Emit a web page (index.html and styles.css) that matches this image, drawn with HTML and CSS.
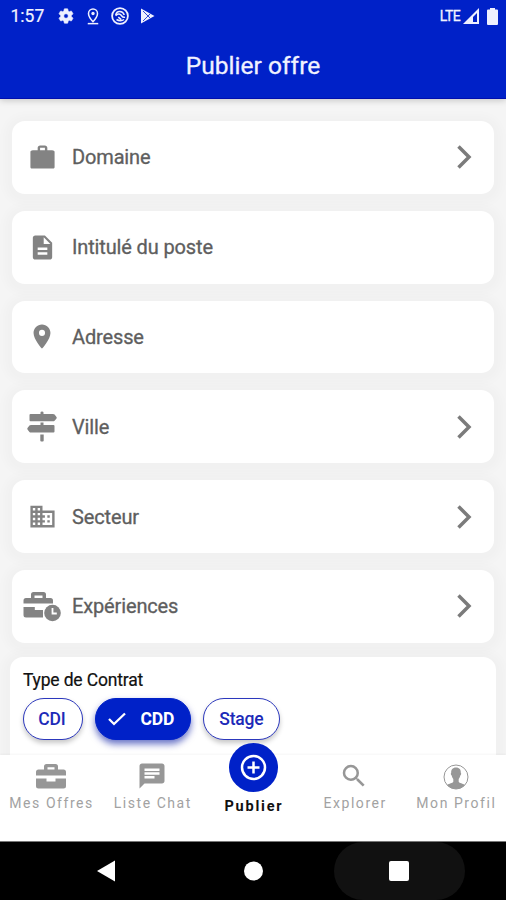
FILE: index.html
```html
<!DOCTYPE html>
<html lang="fr">
<head>
<meta charset="utf-8">
<title>Publier offre</title>
<link rel="stylesheet" href="styles.css">
</head>
<body>
<div class="screen">
  <header class="header">
    <div class="status">
      <span class="time">1:57</span>
      <svg class="st-gear" width="18" height="18" viewBox="0 0 24 24"><path stroke="#eef0ff" stroke-width=".8" d="M19.14 12.94a7.07 7.07 0 0 0 0-1.88l2.03-1.58a.5.5 0 0 0 .12-.61l-1.92-3.32a.49.49 0 0 0-.59-.22l-2.39.96a7 7 0 0 0-1.62-.94l-.36-2.54A.48.48 0 0 0 13.93 2.400h-3.840a.47.47 0 0 0-.47.41l-.37 2.540c-.59.24-1.130.57-1.620.94l-2.390-.96a.48.48 0 0 0-.59.22L2.740 8.870a.47.47 0 0 0 .12.61l2.030 1.580a7.200 7.200 0 0 0 0 1.880l-2.030 1.580a.5.5 0 0 0-.12.61l1.920 3.320c.12.22.37.29.59.22l2.390-.96c.5.38 1.030.7 1.620.94l.36 2.540c.05.24.24.41.48.41h3.840c.24 0 .44-.17.470-.41l.36-2.540a7 7 0 0 0 1.620-.94l2.390.96c.22.08.47 0 .59-.22l1.920-3.320a.47.47 0 0 0-.12-.61zM12 15a3 3 0 1 1 0-6 3 3 0 0 1 0 6z"/></svg>
      <svg class="st-pin" width="18" height="19" viewBox="0 0 24 24"><path d="M18 8c0-3.310-2.690-6-6-6S6 4.690 6 8c0 4.500 6 11 6 11s6-6.500 6-11z" fill="none" stroke="#eef0ff" stroke-width="2"/><circle cx="12" cy="8" r="2.200"/><path d="M5 20.500h14v2H5z"/></svg>
      <svg class="st-ring" width="18" height="18" viewBox="0 0 18 18" fill="none" stroke="#eef0ff"><circle cx="9" cy="9" r="7.900" stroke-width="1.800"/><path d="M4.700 8.200C5.500 3.600 11.500 3.300 13.300 8M4.500 8.800c2.500-3 5-1.800 6.300.2 1 1.600 2.200 1.500 3.200 1.200M5.500 12.500c2.500 1.500 5.500 1.500 7.500 0M7.300 10.200l3 2.500" stroke-width="1.500"/></svg>
      <svg class="st-play" width="15" height="16" viewBox="0 0 15 16"><path d="M1 .6 14.500 8 1 15.400z"/><path d="m3 3 7 7M3 13l7-7" fill="none" stroke="#0021c8" stroke-width=".8"/></svg>
      <span class="lte">LTE</span>
      <svg class="st-signal" width="16" height="16" viewBox="0 0 16 16"><path fill-rule="evenodd" d="M16 0v16H0zM14 5v9h-4V9z"/></svg>
      <svg class="st-battery" width="11" height="17" viewBox="0 0 11 17"><path d="M3 0h5v1.500h2q1 0 1 1V16q0 1-1 1H1q-1 0-1-1V2.500q0-1 1-1h2z"/></svg>
    </div>
    <h1 class="title">Publier offre</h1>
  </header>

  <main class="content">
    <div class="field">
      <span class="icon"><svg width="29" height="29" viewBox="0 0 24 24"><path d="M20 6h-4V4c0-1.110-.89-2-2-2h-4c-1.110 0-2 .89-2 2v2H4c-1.110 0-2 .6-2 1.300v12.700c0 .7.600 1 1.300 1h17.400c.7 0 1.300-.3 1.300-1V7.300C22 6.600 21.110 6 20 6zm-6 0h-4V4h4z"/></svg></span>
      <span class="label">Domaine</span>
      <svg class="chevron" width="16" height="26" viewBox="0 0 16 26"><path d="m2.500 2.500 10.500 10.500L2.500 23.500"/></svg>
    </div>
    <div class="field">
      <span class="icon"><svg width="29" height="29" viewBox="0 0 24 24"><path d="M14 2H6c-1.100 0-2 .9-2 2v16c0 1.100.9 2 2 2h12c1.100 0 2-.9 2-2V8zm2 16H8v-2h8zm0-4H8v-2h8zm-3-5V3.500L18.500 9z"/></svg></span>
      <span class="label">Intitulé du poste</span>
    </div>
    <div class="field">
      <span class="icon"><svg width="30" height="29" viewBox="0 0 24 24"><path d="M12 2C8.130 2 5 5.130 5 9c0 5.250 7 13 7 13s7-7.750 7-13c0-3.870-3.130-7-7-7zm0 9.500a2.500 2.500 0 1 1 0-5 2.500 2.500 0 0 1 0 5z"/></svg></span>
      <span class="label">Adresse</span>
    </div>
    <div class="field">
      <span class="icon"><svg width="30" height="31" viewBox="0 0 30 31"><path d="M13.500 3V1.500q0-1 1.500-1t1.500 1V3H26q1 0 1.600.6L29.500 6q.5.700 0 1.400l-1.900 2.300q-.6.600-1.600.6H3.500q-1 0-1-1V4q0-1 1-1zM13.500 14v-2.500h3V14h10q1 0 1 1v5.500q0 1-1 1H4q-1 0-1.600-.6L.5 18.500q-.5-.7 0-1.400l1.900-2.500Q3 14 4 14zM13.300 23.500h3.400v6q0 1-1 1h-1.400q-1 0-1-1z"/></svg></span>
      <span class="label">Ville</span>
      <svg class="chevron" width="16" height="26" viewBox="0 0 16 26"><path d="m2.500 2.500 10.500 10.500L2.500 23.500"/></svg>
    </div>
    <div class="field">
      <span class="icon"><svg width="29" height="29" viewBox="0 0 24 24"><path d="M12 7V3H2v18h20V7zM6 19H4v-2h2zm0-4H4v-2h2zm0-4H4V9h2zm0-4H4V5h2zm4 12H8v-2h2zm0-4H8v-2h2zm0-4H8V9h2zm0-4H8V5h2zm10 12h-8v-2h2v-2h-2v-2h2v-2h-2V9h8zm-2-8h-2v2h2zm0 4h-2v2h2z"/></svg></span>
      <span class="label">Secteur</span>
      <svg class="chevron" width="16" height="26" viewBox="0 0 16 26"><path d="m2.500 2.500 10.500 10.500L2.500 23.500"/></svg>
    </div>
    <div class="field">
      <span class="icon"><svg width="38" height="31" viewBox="0 0 38 31"><path fill-rule="evenodd" d="M8 7V3.500q0-2.500 2.500-2.500h10q2.500 0 2.500 2.500V7h4.500q2.500 0 2.500 2.500V12.500H.5V9.500Q.5 7 3 7zm3.500 0h8V4.500h-8zM.5 16h11.300v3h8.200v7.500H3q-2.500 0-2.500-2.500z"/><circle cx="29.500" cy="22" r="8.300"/><path d="M29.500 17v5.500h4.300" fill="none" stroke="#fff" stroke-width="1.800"/></svg></span>
      <span class="label">Expériences</span>
      <svg class="chevron" width="16" height="26" viewBox="0 0 16 26"><path d="m2.500 2.500 10.500 10.500L2.500 23.500"/></svg>
    </div>
    <section class="contract">
      <h2 class="contract-title">Type de Contrat</h2>
      <div class="chips">
        <span class="chip chip-cdi">CDI</span>
        <span class="chip chip-on"><svg width="20" height="16" viewBox="0 0 20 16"><path d="m2 8 5 5L18 2.500" fill="none" stroke="#fff" stroke-width="2.300"/></svg>CDD</span>
        <span class="chip chip-stage">Stage</span>
      </div>
    </section>
  </main>

  <nav class="tabs">
    <div class="tab">
      <svg width="30" height="26" viewBox="0 0 30 26"><path fill-rule="evenodd" d="M8 6.500V3.500Q8 1 10.500 1h9Q22 1 22 3.500v3h5.500Q30 6.500 30 9v3.500H0V9q0-2.500 2.500-2.500zm3.500 0h7V4.300h-7zM0 15.500h10.500v3h9v-3H30V23q0 2.500-2.500 2.500h-25Q0 25.500 0 23z"/></svg>
      <span>Mes Offres</span>
    </div>
    <div class="tab">
      <svg width="30" height="30" viewBox="0 0 24 24"><path d="M20 2H4c-1.100 0-1.990.9-1.990 2L2 22l4-4h14c1.100 0 2-.9 2-2V4c0-1.100-.9-2-2-2zM6 9h12v2H6zm8 5H6v-2h8zm4-6H6V6h12z"/></svg>
      <span>Liste Chat</span>
    </div>
    <div class="tab tab-active">
      <div class="bubble"><svg width="27" height="27" viewBox="0 0 27 27" fill="none" stroke="#fff" stroke-width="2.500"><circle cx="13.500" cy="13.500" r="11.500"/><path d="M13.500 7.500v12M7.500 13.500h12"/></svg></div>
      <span>Publier</span>
    </div>
    <div class="tab">
      <svg width="30" height="30" viewBox="0 0 24 24"><path d="M15.500 14h-.79l-.28-.27A6.470 6.470 0 0 0 16 9.500 6.500 6.500 0 1 0 9.500 16c1.610 0 3.090-.59 4.230-1.570l.27.28v.79l5 4.990L20.490 19zm-6 0a4.500 4.500 0 1 1 0-9 4.500 4.500 0 0 1 0 9z"/></svg>
      <span>Explorer</span>
    </div>
    <div class="tab">
      <svg width="26" height="42" viewBox="0 -1 26 26"><circle cx="13" cy="13" r="12" fill="none" stroke="#979797" stroke-width="1"/><path d="M13 3.500c-3.500 0-5 2.300-4.800 5.300-.7.600-.3 2.300.5 2.700.3 1.600.9 2.700 1.600 3.500v2.700c-.7 1.500-4.100 1.600-6.300 3.300A12 12 0 0 0 22 21c-2.200-1.700-5.600-1.800-6.300-3.300V15c.7-.8 1.300-1.900 1.600-3.500.8-.4 1.200-2.100.5-2.700.2-3-1.300-5.300-4.800-5.300z"/></svg>
      <span>Mon Profil</span>
    </div>
  </nav>

  <footer class="system">
    <div class="key"><svg class="back" width="18" height="22" viewBox="0 0 18 22"><path d="M18 .5v21L0 11z"/></svg></div>
    <div class="key"><svg width="19" height="20" viewBox="0 0 19 20"><circle cx="9.500" cy="10" r="9.500"/></svg></div>
    <div class="key key-pressed"><svg width="20" height="20" viewBox="0 0 20 20"><rect width="20" height="20" rx="2"/></svg></div>
  </footer>
</div>
</body>
</html>
```

FILE: styles.css
```css
* { box-sizing: border-box; }

body {
  margin: 0;
  font-family: Roboto, "Liberation Sans", sans-serif;
  background: #f5f5f5;
}

svg { display: block; flex: none; }

.screen {
  width: 506px;
  height: 900px;
  display: flex;
  flex-direction: column;
  overflow: hidden;
}

/* Header */
.header {
  flex: none;
  height: 99px;
  background: #0021c8;
  color: #f1f2ff;
  border-bottom: 1px solid #000fae;
  box-shadow: 0 1px 7px rgba(0, 0, 0, .22);
  position: relative;
}

.status {
  display: flex;
  align-items: center;
  height: 32px;
  padding: 0 8px 0 10.500px;
  fill: #eef0ff;
}

.time {
  width: 46.500px;
  font-size: 17.500px;
  -webkit-text-stroke: .2px #f1f2ff;
}

.st-pin { margin-left: 9px; }
.st-ring { margin-left: 9px; }
.st-play { margin-left: 11px; }

.lte {
  margin-left: auto;
  font-size: 14px;
  letter-spacing: -.6px;
  -webkit-text-stroke: .3px #f1f2ff;
}

.st-signal { margin-left: 3px; }
.st-battery { margin-left: 8px; }

.title {
  margin: 19px 0 0;
  text-align: center;
  font-size: 24.500px;
  line-height: 30px;
  font-weight: 400;
  letter-spacing: .05px;
  -webkit-text-stroke: .3px #f1f2ff;
}

/* Form */
.content {
  flex: none;
  height: 656px;
  overflow: hidden;
  padding: 22px 11.600px 0 12.400px;
  display: flex;
  flex-direction: column;
  gap: 17px;
}

.field {
  flex: none;
  height: 72.800px;
  border-radius: 13px;
  background: #fff;
  box-shadow: 0 2px 10px 8px rgba(0, 0, 0, .02);
  display: flex;
  align-items: center;
  padding-right: 22px;
  position: relative;
}

.content { isolation: isolate; }

.icon {
  width: 59.600px;
  display: flex;
  justify-content: center;
  fill: #838383;
}

.label {
  flex: 1;
  font-size: 20px;
  letter-spacing: -.14px;
  color: #5e5e5e;
  -webkit-text-stroke: .3px #5e5e5e;
}

.chevron {
  fill: none;
  stroke: #7b7b7b;
  stroke-width: 3.500px;
}

.contract {
  flex: none;
  height: 140px;
  margin: -2.500px -2px 0;
  padding: 12px 12.500px;
  border-radius: 13px;
  background: #fff;
  box-shadow: 0 2px 10px 8px rgba(0, 0, 0, .02);
  position: relative;
}

.contract-title {
  margin: 0 0 7px;
  font-size: 17.500px;
  letter-spacing: -.16px;
  line-height: 22px;
  font-weight: 400;
  color: #111;
  -webkit-text-stroke: .2px #111;
}

.chips { display: flex; }

.chip {
  height: 42px;
  border: 1px solid #2c38bd;
  border-radius: 21px;
  background: #fff;
  color: #1c2ab8;
  font-size: 17.500px;
  letter-spacing: -.2px;
  font-weight: 500;
  display: flex;
  align-items: center;
  justify-content: center;
  box-shadow: 0 3px 5px rgba(0, 0, 0, .22);
}

.chip-cdi { width: 60px; padding-right: 2px; }

.chip-on {
  width: 96px;
  margin: 0 12px;
  padding-right: 5px;
  gap: 14px;
  border-color: #0021c8;
  background: #0021c8;
  color: #fff;
  font-weight: 700;
  box-shadow: 0 4px 7px rgba(0, 20, 160, .6);
}

.chip-stage { width: 77px; }

/* Bottom tabs */
.tabs {
  flex: none;
  height: 86px;
  padding-left: 1px;
  display: grid;
  grid-template-columns: repeat(5, 101.200px);
  background: #fff;
  box-shadow: 0 -1px 2px rgba(0, 0, 0, .04);
  position: relative;
}

.tab {
  display: flex;
  flex-direction: column;
  align-items: center;
  font-size: 14px;
  letter-spacing: 1.550px;
  color: #a2a2a2;
  fill: #979797;
  white-space: nowrap;
}

.tab > svg { height: 42px; margin-right: 1.500px; }
.tab > span { line-height: 12px; }

.tab-active {
  color: #111;
  font-weight: 700;
  font-size: 14.500px;
  letter-spacing: 1.800px;
}

.bubble {
  flex: none;
  width: 49px;
  height: 49px;
  margin: -12px 0 9px;
  border-radius: 50%;
  background: #0021c8;
  display: flex;
  align-items: center;
  justify-content: center;
}

/* System navigation */
.system {
  flex: none;
  height: 59px;
  display: flex;
  justify-content: center;
  gap: 15px;
  background: #000;
  border-top: 1px solid #777;
  fill: #fff;
}

.key {
  width: 131px;
  height: 58px;
  display: flex;
  align-items: center;
  justify-content: center;
  border-radius: 29px;
}

.back { margin-right: 3px; }

.key-pressed { background: #111; }
```
